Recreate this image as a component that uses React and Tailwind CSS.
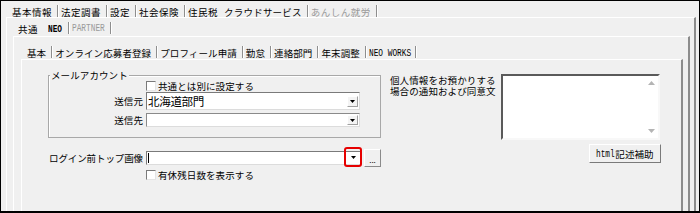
import React from 'react';

const Sep = () => (
  <span className="ml-[5px] mr-[2px] h-[12px] w-[2px] self-end border-l border-l-[#8e8e8e] border-r border-r-white" />
);

const Tab = ({ children, sep, className = '' }) => (
  <>
    <span className={`leading-[10px] whitespace-nowrap ${className}`}>{children}</span>
    {sep && <Sep />}
  </>
);

// narrow bitmap-like latin text
const Mono = ({ w, bold, children }) => (
  <span className={`inline-block ${w} whitespace-nowrap leading-[10px]`}>
    <span className={`inline-block origin-left scale-x-[0.71] font-['Liberation_Mono',monospace] text-[11px] tracking-normal ${bold ? 'font-bold' : ''}`}>
      {children}
    </span>
  </span>
);

const DownArrow = ({ color = '#000' }) => (
  <svg width="5" height="3" viewBox="0 0 5 3">
    <path d="M0 0h5L2.5 3z" fill={color} />
  </svg>
);

const ArrowBox = ({ h = 'h-[11px]' }) => (
  <span className={`flex ${h} w-[11px] items-center justify-center border border-t-white border-l-white border-r-[#a0a0a0] border-b-[#a0a0a0] bg-[#f4f4f4]`}>
    <DownArrow />
  </span>
);

const Check = () => (
  <span className="h-[10px] w-[10px] shrink-0 border border-t-[#7a7a7a] border-l-[#7a7a7a] border-r-[#e4e4e4] border-b-[#e4e4e4] bg-white" />
);

export default function App() {
  return (
    <div className="flex h-[213px] w-[700px] flex-col overflow-hidden border border-b-2 border-black bg-[#f0f0f0] font-['Noto_Sans_CJK_JP','Noto_Sans',sans-serif] text-[9.5px] tracking-[0.1px] text-black">
      {/* top tabs */}
      <div className="flex h-[16px] shrink-0 items-end pl-[11px] tracking-[0.5px]">
        <Tab sep>基本情報</Tab>
        <Tab sep>法定調書</Tab>
        <Tab sep>設定</Tab>
        <Tab sep>社会保険</Tab>
        <Tab>住民税</Tab>
        <Tab sep className="ml-[6px] tracking-[0.2px]">クラウドサービス</Tab>
        <Tab sep className="text-[#9a9a9a]">あんしん就労</Tab>
      </div>

      <div className="ml-[5px] mr-[3px] flex min-h-0 flex-1 flex-col border-t border-l border-white border-r-2 border-r-[#8c8c8c]">
        <div className="flex h-[18px] shrink-0 items-end pb-[2px] pl-[11px]">
          <Tab className="tracking-[0.5px]">共通</Tab>
          <span className="ml-[10px]" />
          <Mono w="w-[15px]" bold>NEO</Mono>
          <Sep />
          <span className="text-[#9a9a9a]">
            <Mono w="w-[33px]">PARTNER</Mono>
          </span>
          <Sep />
        </div>

        <div className="ml-[6px] mr-[4px] flex min-h-0 flex-1 flex-col border-t border-l border-white border-r-2 border-r-[#8c8c8c]">
          <div className="flex h-[22px] shrink-0 items-end pb-[1px] pl-[13px]">
            <Tab sep>基本</Tab>
            <Tab sep>オンライン応募者登録</Tab>
            <Tab sep>プロフィール申請</Tab>
            <Tab sep>勤怠</Tab>
            <Tab sep>連絡部門</Tab>
            <Tab sep>年末調整</Tab>
            <Mono w="w-[41px]">NEO WORKS</Mono>
            <Sep />
          </div>

          <div className="ml-[7px] mr-[5px] flex min-h-0 flex-1 border-t border-l border-white border-r-2 border-r-[#8c8c8c] pl-[26px] pt-[15px]">
            {/* left column */}
            <div className="flex w-[333px] shrink-0 flex-col">
              <div className="relative h-[63px] border border-[#a8a8a8] pt-[5px] shadow-[inset_1px_1px_0_#fff]">
                <span className="absolute left-[1px] top-[-7px] bg-[#f0f0f0] px-[1px] leading-[12px]">メールアカウント</span>
                <div className="flex h-[10px] items-center gap-[2px] pl-[97px]">
                  <Check />
                  <span className="leading-[10px]">共通とは別に設定する</span>
                </div>
                <div className="mt-[1px] flex items-center gap-[3px]">
                  <span className="w-[94px] text-right leading-[12px]">送信元</span>
                  <div className="flex h-[18px] w-[214px] items-center justify-between border border-[#7a7a7a] border-r-[#dcdcdc] border-b-[#dcdcdc] bg-white pl-[1px] pr-[1px]">
                    <span className="text-[11.5px] leading-[14px] tracking-[-0.3px]">北海道部門</span>
                    <ArrowBox />
                  </div>
                </div>
                <div className="mt-[3px] flex items-center gap-[3px]">
                  <span className="w-[94px] text-right leading-[12px]">送信先</span>
                  <div className="flex h-[14px] w-[214px] items-center justify-end border border-[#8a8a8a] border-r-[#dcdcdc] border-b-[#dcdcdc] bg-white pr-[1px]">
                    <ArrowBox h="h-[10px]" />
                  </div>
                </div>
              </div>

              <div className="mt-[11px] flex h-[18px] items-center">
                <span className="w-[95px] whitespace-nowrap text-right leading-[12px] tracking-[-0.1px]">ログイン前トップ画像</span>
                <div className="relative ml-[3px] flex h-[14px] w-[216px] items-center border border-[#7a7a7a] border-r-[#dcdcdc] border-b-[#dcdcdc] bg-white pl-[1px]">
                  <span className="h-[10px] w-[1px] bg-black" />
                  <span className="absolute left-[197px] top-[-5px] flex h-[20px] w-[18px] items-center justify-center rounded-[3px] border-2 border-[#e60000]">
                    <DownArrow />
                  </span>
                </div>
                <button className="ml-[2px] flex h-[18px] w-[17px] items-end justify-center border border-t-white border-l-white border-r-[#8a8a8a] border-b-[#8a8a8a] bg-[#f0f0f0] pb-[3px] text-[8px] leading-[6px] tracking-normal">
                  ...
                </button>
              </div>

              <div className="mt-[2px] flex h-[11px] items-center gap-[2px] pl-[98px]">
                <Check />
                <span className="leading-[10px]">有休残日数を表示する</span>
              </div>
            </div>

            {/* right column */}
            <div className="ml-[9px] mt-[-1px] flex w-[271px] shrink-0 flex-col">
              <div className="flex w-[270px]">
                <div className="mt-[1px] flex w-[111px] flex-col whitespace-nowrap">
                  <span className="h-[11px] leading-[11px]">個人情報をお預かりする</span>
                  <span className="h-[11px] leading-[11px]">場合の通知および同意文</span>
                </div>
                <div className="flex h-[66px] w-[159px] justify-end border-2 border-t-[#5a5a5a] border-l-[#5a5a5a] border-r-[#f8f8f8] border-b-[#f8f8f8] bg-white pr-[3px]">
                  <div className="flex flex-col justify-between py-[5px]">
                    <svg width="7" height="4" viewBox="0 0 7 4">
                      <path d="M0 4h7L3.5 0z" fill="#b4b4b4" />
                    </svg>
                    <svg width="7" height="4" viewBox="0 0 7 4">
                      <path d="M0 0h7L3.5 4z" fill="#b4b4b4" />
                    </svg>
                  </div>
                </div>
              </div>
              <button className="mt-[4px] flex h-[19px] w-[72px] items-center justify-center self-end border border-t-white border-l-white border-r-[#7a7a7a] border-b-[#7a7a7a] bg-[#f0f0f0] leading-[12px]">
                <Mono w="w-[18px]">html</Mono>
                <span className="ml-[1px]">記述補助</span>
              </button>
            </div>
          </div>
        </div>
      </div>
    </div>
  );
}
